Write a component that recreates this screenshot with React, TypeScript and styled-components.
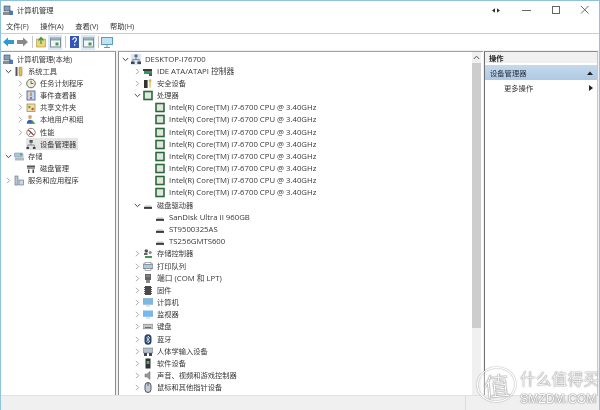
import React from "react";
import styled, { createGlobalStyle } from "styled-components";

const Global = createGlobalStyle`
  html, body { margin: 0; padding: 0; background: #fff; }
  body { width: 600px; height: 410px; overflow: hidden; font-family: "Open Sans", "Noto Sans CJK SC", sans-serif; }
`;

const Win = styled.div`
  position: relative; width: 600px; height: 410px; box-sizing: border-box;
  border: 1px solid #8fc3dc; border-bottom: 0; background: #fff;
  display: flex; flex-direction: column; overflow: hidden; color: #2a2a2a;
  font-size: 7.3px; filter: blur(0.3px);
`;
const TitleBar = styled.div`
  height: 18px; display: flex; align-items: center; padding-left: 2px; gap: 4px; flex: none; color: #333;
`;
const WinBtns = styled.div`
  margin-left: auto; display: flex; align-items: center; color: #555;
`;
const PinIcon = styled.span`
  display: flex; width: 30px; justify-content: center; margin-right: 1px;
`;
const WinBtn = styled.span`
  width: 29px; display: flex; justify-content: center;
`;
const MenuBar = styled.div`
  height: 14px; display: flex; align-items: center; gap: 11.5px; padding-left: 5px; flex: none;
  border-bottom: 1px solid #cdcdcd; color: #333;
`;
const ToolBar = styled.div`
  height: 16px; display: flex; align-items: center; flex: none;
`;
const ToolBtn = styled.span<{ $on?: boolean }>`
  width: 14px; height: 15px; display: flex; align-items: center; justify-content: center;
  background: ${p => (p.$on ? "#d8e9f6" : "transparent")};
`;
const ToolSep = styled.span`
  width: 1px; height: 12px; background: #c8c8c8; margin: 0 1px 0 3px;
`;
const Panes = styled.div`
  flex: 1; display: flex; background: #f0f0f0; padding-top: 1px; min-height: 0;
`;
const LeftPane = styled.div`
  width: 115px; flex: none; background: #fff; border-top: 1px solid #a0a0a0; border-right: 1px solid #8c8c8c;
  box-sizing: border-box; padding-top: 1px; margin-right: 1px;
`;
const CenterPane = styled.div`
  width: 365px; flex: none; background: #fff; border-left: 1.5px solid #909090; border-top: 1px solid #a0a0a0;
  box-sizing: border-box; display: flex; margin-left: 1px;
`;
const TreeCol = styled.div`
  flex: 1; padding-top: 1px; overflow: hidden;
`;
const Scrollbar = styled.div`
  width: 9px; background: #f0f0f0; margin-right: 2px; display: flex; flex-direction: column; align-items: center;
`;
const ScrollUp = styled.div`
  height: 11px; display: flex; align-items: center; justify-content: center; flex: none;
`;
const Thumb = styled.div`
  width: 9px; height: 265px; background: #cdcdcd; flex: none;
`;
const RightPane = styled.div`
  flex: 1; background: #fff; border-left: 1.5px solid #707070; border-top: 1px solid #8c8c8c; border-right: 1px solid #c8c8c8;
  box-sizing: border-box; margin-left: 1px; margin-right: 1px;
`;
const ActionHead = styled.div`
  height: 11px; background: #f0f0f0; font-weight: 700; display: flex; align-items: center; padding-left: 4px; color: #222;
  margin-bottom: 2px;
`;
const ActionSel = styled.div`
  height: 15px; background: linear-gradient(#c6d9ec, #aec9e3); display: flex; align-items: center; padding: 0 4px 0 5px;
  justify-content: space-between; color: #1f2b38;
`;
const ActionItem = styled.div`
  height: 15px; display: flex; align-items: center; justify-content: space-between; padding: 0 4px 0 19px; color: #333;
`;
const Row = styled.div<{ $indent: number }>`
  height: 12.18px; display: flex; align-items: center; padding-left: ${p => p.$indent}px; white-space: nowrap; color: #383838;
`;
const Arrow = styled.span`
  width: 11px; flex: none; display: flex; justify-content: center; align-items: center;
`;
const RowBody = styled.span<{ $sel?: boolean }>`
  display: flex; align-items: center; height: 12.18px; padding-right: ${p => (p.$sel ? 1 : 0)}px;
  background: ${p => (p.$sel ? "#e5e5e5" : "transparent")};
`;
const Ic = styled.span<{ $host?: boolean }>`
  width: 10px; height: 11px; display: flex; flex: none; align-items: center; justify-content: center; margin-right: 3px;
  background: ${p => (p.$host ? "#dbe8f4" : "transparent")};
`;
const Label = styled.span<{ $latin?: boolean }>`
  font-size: ${p => (p.$latin ? 7.75 : 7.25)}px; line-height: 11px; padding: 0 1px;
`;
const StatusBar = styled.div`
  height: 14px; flex: none; background: #f0f0f0; border-top: 1px solid #e2e2e2; display: flex;
`;
const StatusCell = styled.div`
  width: 106px; margin-left: auto; border-left: 1px solid #dcdcdc; margin-right: 27px;
`;
const Mark = styled.div`
  position: absolute; left: 476px; top: 366px; width: 124px; height: 40px; display: flex; align-items: flex-start;
  color: #fff; text-shadow: 0 0 1px #777, 0 0 1px #999, 0 0 2px #aaa;
`;
const MarkCircle = styled.div`
  width: 37px; height: 33px; border-radius: 50%; border: 1.2px solid #fff; box-shadow: 0 0 1.5px #777, inset 0 0 1.5px #777;
  display: flex; align-items: center; justify-content: center; font-size: 26px; flex: none; font-family: "Noto Sans CJK SC", sans-serif;
  font-weight: 300; transform: rotate(-6deg); background: rgba(255,255,255,.35); color: #fff;
`;
const MarkText = styled.div`
  display: flex; flex-direction: column; margin-left: 4px; margin-top: 4px; line-height: 1;
`;
const MarkCn = styled.div`
  font-size: 15.8px; font-family: "Noto Sans CJK SC", sans-serif; font-weight: 300; white-space: nowrap; height: 19px;
`;
const MarkEn = styled.div`
  font-size: 12.2px; font-family: "Liberation Sans", sans-serif; white-space: nowrap; margin-top: 3px;
`;

const Chev = ({ open }: { open?: boolean }) =>
  open ? (
    <svg width="7" height="7" viewBox="0 0 7 7"><path d="M.8 2l2.7 2.7L6.2 2" fill="none" stroke="#444" strokeWidth="1" /></svg>
  ) : (
    <svg width="7" height="7" viewBox="0 0 7 7"><path d="M2 .8l2.7 2.7L2 6.2" fill="none" stroke="#a6a6a6" strokeWidth="1" /></svg>
  );

type K = "mgmt"|"tools"|"clock"|"event"|"share"|"users"|"perf"|"dev"|"store"|"diskmg"|"svc"|"host"|"ide"|"sec"|"cpu"|"disk"|"ctrl"|"print"|"port"|"fw"|"pc"|"mon"|"kbd"|"bt"|"hid"|"soft"|"snd"|"mouse";

const Icon = ({ k }: { k: K }) => {
  const s = { width: 10, height: 11, viewBox: "0 0 10 11" };
  switch (k) {
    case "mgmt": return <svg {...s}><rect x="1" y="1" width="6" height="5" fill="#7f9fbf" stroke="#445" strokeWidth=".6"/><rect x="0" y="7" width="8" height="3" fill="#8c8c8c"/><path d="M6 5l4 1v4H6z" fill="#4a78b8"/></svg>;
    case "tools": return <svg {...s}><rect x="1.5" y="1" width="2" height="9" fill="#555"/><rect x="5" y="1" width="3" height="9" rx="1" fill="#e0c060" stroke="#8a7020" strokeWidth=".5"/></svg>;
    case "clock": return <svg {...s}><circle cx="5" cy="5.5" r="4.3" fill="#f1ecd6" stroke="#666" /><path d="M5 2.8v2.7h2.4" fill="none" stroke="#444" strokeWidth=".8"/></svg>;
    case "event": return <svg {...s}><rect x="1" y="1" width="8" height="9" fill="#c8d4ea" stroke="#3b5b93" strokeWidth=".8"/><path d="M5 2.5v3.5" stroke="#d08020" strokeWidth="1.4"/><circle cx="5" cy="8" r=".9" fill="#c03030"/></svg>;
    case "share": return <svg {...s}><rect x="1" y="2" width="8" height="7.5" fill="#efe0a0" stroke="#99823a" strokeWidth=".7"/><circle cx="3.4" cy="5" r="1.2" fill="#6a9a50"/><circle cx="6.6" cy="7" r="1.2" fill="#c05050"/></svg>;
    case "users": return <svg {...s}><circle cx="4" cy="3" r="1.9" fill="#d8a868"/><path d="M.8 9.8c0-3 1.5-4 3.2-4s3.2 1 3.2 4z" fill="#3662b0"/><path d="M6 6l3.5 3.8H5z" fill="#4a9848"/></svg>;
    case "perf": return <svg {...s}><circle cx="5" cy="5.5" r="4.2" fill="#fff" stroke="#777" strokeWidth=".9"/><path d="M2.3 3l5.4 5" stroke="#c83030" strokeWidth="1.3"/><path d="M3 8l2-3" stroke="#555" strokeWidth=".8"/></svg>;
    case "dev": return <svg {...s}><rect x="3.5" y="1" width="3.2" height="2.8" fill="#555"/><path d="M5 3.8V6M1.8 8V6h6.5v2" fill="none" stroke="#777" strokeWidth=".8"/><rect x=".5" y="8" width="2.6" height="2" fill="#444"/><rect x="6.9" y="8" width="2.6" height="2" fill="#444"/></svg>;
    case "store": return <svg {...s}><rect x="0" y="2" width="9" height="4" rx="1" fill="#a8c6e0" stroke="#6f8ea8" strokeWidth=".5"/><rect x="1" y="6.5" width="9" height="3" fill="#b8b8b8"/><circle cx="7" cy="3.5" r="1" fill="#40a050"/></svg>;
    case "diskmg": return <svg {...s}><path d="M1 3h8v3H1z" fill="#9a9a9a"/><rect x="1" y="2.5" width="8" height="1.5" fill="#555"/><path d="M2 6.5h1.4V10H2zM6.5 6.5H8V10H6.5z" fill="#444"/></svg>;
    case "svc": return <svg {...s}><rect x="1" y="1" width="3" height="9" fill="#b8c8d8" stroke="#667" strokeWidth=".6"/><rect x="5" y="5" width="4.5" height="5" fill="#c8d8ec" stroke="#667" strokeWidth=".6"/></svg>;
    case "host": return <svg {...s}><rect x="3.5" y=".5" width="3" height="2.8" fill="#5a6a80"/><path d="M5 3.4v2.2M1.8 7.6V5.6h6.4v2" fill="none" stroke="#5a6a80" strokeWidth=".8"/><rect x="0" y="7.5" width="3.6" height="2.5" fill="#445"/><rect x="6.4" y="7.5" width="3.6" height="2.5" fill="#445"/></svg>;
    case "ide": return <svg {...s}><rect x="0" y="3" width="9" height="2" fill="#3a3a3a"/><rect x="1" y="5" width="8" height="3" fill="#2f9a58"/><rect x="6" y="7.5" width="3" height="2.5" fill="#555"/></svg>;
    case "sec": return <svg {...s}><rect x="1" y="2" width="3.6" height="8" fill="#333"/><path d="M7 1.3a1.4 1.4 0 1 1 0 2.8 1.4 1.4 0 0 1 0-2.8zM6.4 4h1.2v5.5H6.4z" fill="#d9b040"/></svg>;
    case "cpu": return <svg {...s}><rect x="1" y="1.5" width="8" height="8" fill="#dfe7e0" stroke="#2c6a3a" strokeWidth="1.6"/></svg>;
    case "disk": return <svg {...s}><path d="M2 5.5h6l1 1.6H1z" fill="#c2c2c2"/><rect x="1" y="7" width="8" height="1.9" fill="#3c3c3c"/></svg>;
    case "ctrl": return <svg {...s}><circle cx="3.3" cy="3" r="1.8" fill="#555"/><rect x="1" y="5" width="3.5" height="2" fill="#666"/><rect x="2" y="8" width="7" height="2" fill="#3f9a50"/><circle cx="7.2" cy="4.6" r="1.5" fill="#888"/></svg>;
    case "print": return <svg {...s}><rect x="0" y="3" width="10" height="4.5" fill="#a8cce4" stroke="#555" strokeWidth=".6"/><rect x="2" y="1.5" width="6" height="1.8" fill="#fff" stroke="#666" strokeWidth=".5"/><rect x="2" y="7.5" width="6" height="2" fill="#fff" stroke="#666" strokeWidth=".5"/></svg>;
    case "port": return <svg {...s}><rect x="2" y="1" width="6" height="6" fill="#666"/><rect x="3" y="7" width="4" height="3" fill="#888"/><path d="M3 3h4" stroke="#bbb" strokeWidth=".7"/></svg>;
    case "fw": return <svg {...s}><rect x="2" y="1" width="6" height="9" fill="#4a4a4a"/><path d="M1 2.5h1M1 4.5h1M1 6.5h1M1 8.5h1M8 2.5h1M8 4.5h1M8 6.5h1M8 8.5h1" stroke="#333" strokeWidth=".8"/></svg>;
    case "pc": return <svg {...s}><rect x="0" y="1.2" width="10" height="6.3" fill="#7ab8e8" stroke="#9ab" strokeWidth=".5"/><path d="M3 8.5h4v1H3z" fill="#c0c8d0"/></svg>;
    case "mon": return <svg {...s}><rect x="0" y="1.5" width="10" height="6.3" fill="#78b8ea"/><path d="M3 8.5h4v1H3z" fill="#c0c8d0"/></svg>;
    case "kbd": return <svg {...s}><rect x="0" y="3.2" width="10" height="4.6" fill="#c6c6c6" stroke="#777" strokeWidth=".6"/><path d="M2 6.5h6" stroke="#555" strokeWidth=".8"/></svg>;
    case "bt": return <svg {...s}><rect x="1.5" y=".3" width="7" height="10.4" rx="3.5" fill="#26486e"/><path d="M3.2 3.6l3.6 3.6L5 9V2l1.8 1.8L3.2 7.4" fill="none" stroke="#fff" strokeWidth=".7"/></svg>;
    case "hid": return <svg {...s}><rect x="0" y="2" width="10" height="5" fill="#b4c0cc" stroke="#667" strokeWidth=".5"/><rect x="1" y="7" width="3" height="3" fill="#445"/><rect x="6" y="7" width="3" height="3" fill="#445"/></svg>;
    case "soft": return <svg {...s}><rect x="2.5" y=".5" width="5" height="10" fill="#333"/><rect x="3.7" y="3" width="2.6" height="3" fill="#50b070"/></svg>;
    case "snd": return <svg {...s}><path d="M2 4h2l3-2.5v8L4 7H2z" fill="#9a9a9a" stroke="#666" strokeWidth=".5"/></svg>;
    case "mouse": return <svg {...s}><rect x="2" y=".5" width="6" height="10" rx="3" fill="#c4ccd4" stroke="#445" strokeWidth=".9"/><path d="M5 1v3" stroke="#445" strokeWidth=".8"/></svg>;
  }
};

type Item = { t: string; k: K; lv: number; a?: "o" | "c"; sel?: boolean };
const left: Item[] = [
  { t: "系统工具", k: "tools", lv: 1, a: "o" },
  { t: "任务计划程序", k: "clock", lv: 2, a: "c" },
  { t: "事件查看器", k: "event", lv: 2, a: "c" },
  { t: "共享文件夹", k: "share", lv: 2, a: "c" },
  { t: "本地用户和组", k: "users", lv: 2, a: "c" },
  { t: "性能", k: "perf", lv: 2, a: "c" },
  { t: "设备管理器", k: "dev", lv: 2, sel: true },
  { t: "存储", k: "store", lv: 1, a: "o" },
  { t: "磁盘管理", k: "diskmg", lv: 2 },
  { t: "服务和应用程序", k: "svc", lv: 1, a: "c" },
];
const cpuRow: Item = { t: "Intel(R) Core(TM) i7-6700 CPU @ 3.40GHz", k: "cpu", lv: 2 };
const center: Item[] = [
  { t: "IDE ATA/ATAPI 控制器", k: "ide", lv: 1, a: "c" },
  { t: "安全设备", k: "sec", lv: 1, a: "c" },
  { t: "处理器", k: "cpu", lv: 1, a: "o" },
  ...Array(8).fill(cpuRow),
  { t: "磁盘驱动器", k: "disk", lv: 1, a: "o" },
  { t: "SanDisk Ultra II 960GB", k: "disk", lv: 2 },
  { t: "ST9500325AS", k: "disk", lv: 2 },
  { t: "TS256GMTS600", k: "disk", lv: 2 },
  { t: "存储控制器", k: "ctrl", lv: 1, a: "c" },
  { t: "打印队列", k: "print", lv: 1, a: "c" },
  { t: "端口 (COM 和 LPT)", k: "port", lv: 1, a: "c" },
  { t: "固件", k: "fw", lv: 1, a: "c" },
  { t: "计算机", k: "pc", lv: 1, a: "c" },
  { t: "监视器", k: "mon", lv: 1, a: "c" },
  { t: "键盘", k: "kbd", lv: 1, a: "c" },
  { t: "蓝牙", k: "bt", lv: 1, a: "c" },
  { t: "人体学输入设备", k: "hid", lv: 1, a: "c" },
  { t: "软件设备", k: "soft", lv: 1, a: "c" },
  { t: "声音、视频和游戏控制器", k: "snd", lv: 1, a: "c" },
  { t: "鼠标和其他指针设备", k: "mouse", lv: 1, a: "c" },
];

const TreeRow = ({ it, base }: { it: Item; base: number }) => (
  <Row $indent={base + it.lv * 12}>
    <Arrow>{it.a && <Chev open={it.a === "o"} />}</Arrow>
    <RowBody $sel={it.sel}>
      <Ic><Icon k={it.k} /></Ic>
      <Label $latin={/[A-Za-z]{2}/.test(it.t)}>{it.t}</Label>
    </RowBody>
  </Row>
);

const PaneIcon = () => (
  <svg width="11" height="11" viewBox="0 0 11 11"><rect x=".5" y="1" width="10" height="9" fill="#f4f4f4" stroke="#7b8a98"/><rect x="1" y="1.5" width="9" height="2" fill="#8ea3b8"/><rect x="5.5" y="5.5" width="3" height="3" fill="#3aa050"/></svg>
);

export default function App() {
  return (
    <>
      <Global />
      <Win>
        <TitleBar>
          <Icon k="mgmt" />
          <span>计算机管理</span>
          <WinBtns>
            <PinIcon><svg width="8" height="5" viewBox="0 0 8 5"><path d="M0 2.5L3 .3v4.4zM8 2.5L5 .3v4.4z" fill="#333"/></svg></PinIcon>
            <WinBtn><svg width="10" height="10" viewBox="0 0 10 10"><path d="M0 5.5h9" stroke="#666" /></svg></WinBtn>
            <WinBtn><svg width="10" height="10" viewBox="0 0 10 10"><rect x="1.5" y="1.5" width="7" height="7" fill="none" stroke="#666" /></svg></WinBtn>
            <WinBtn><svg width="10" height="10" viewBox="0 0 10 10"><path d="M1 1l7.5 7.5M8.5 1L1 8.5" stroke="#666" /></svg></WinBtn>
          </WinBtns>
        </TitleBar>
        <MenuBar>
          <span>文件(F)</span><span>操作(A)</span><span>查看(V)</span><span>帮助(H)</span>
        </MenuBar>
        <ToolBar>
          <ToolBtn><svg width="11" height="10" viewBox="0 0 11 10"><path d="M0 5l5-4.5V3h6v4H5v2.5z" fill="#2a9ad8"/></svg></ToolBtn>
          <ToolBtn><svg width="11" height="10" viewBox="0 0 11 10"><path d="M11 5L6 .5V3H0v4h6v2.5z" fill="#8a8a8a"/></svg></ToolBtn>
          <ToolSep />
          <ToolBtn><svg width="10" height="12" viewBox="0 0 10 12"><path d="M.5 3h9v8h-9z" fill="#ecd37c" stroke="#a99040" strokeWidth=".6"/><path d="M5 8V2.5M2.5 4.5L5 1.5l2.5 3" fill="none" stroke="#3a9a3a" strokeWidth="1.2"/></svg></ToolBtn>
          <ToolBtn $on><PaneIcon /></ToolBtn>
          <ToolSep />
          <ToolBtn><svg width="9" height="12" viewBox="0 0 9 12"><rect width="9" height="12" fill="#3356b8"/><path d="M2.8 4c0-3 3.6-3 3.6-.6 0 1.6-1.8 1.6-1.8 3.4" fill="none" stroke="#fff" strokeWidth="1.1"/><rect x="4" y="8.2" width="1.3" height="1.4" fill="#fff"/></svg></ToolBtn>
          <ToolBtn $on><PaneIcon /></ToolBtn>
          <ToolSep />
          <ToolBtn><svg width="12" height="11" viewBox="0 0 12 11"><rect x=".5" y=".5" width="11" height="7" fill="#bfe2f4" stroke="#5a9bc0"/><path d="M6 8v2M3 10.5h6" stroke="#5a9bc0"/></svg></ToolBtn>
        </ToolBar>
        <Panes>
          <LeftPane>
            <Row $indent={2}>
              <RowBody>
                <Ic><Icon k="mgmt" /></Ic>
                <Label>计算机管理(本地)</Label>
              </RowBody>
            </Row>
            {left.map((it, i) => <TreeRow key={i} it={it} base={-10} />)}
          </LeftPane>
          <CenterPane>
            <TreeCol>
              <Row $indent={1}>
                <Arrow><Chev open /></Arrow>
                <RowBody>
                  <Ic $host><Icon k="host" /></Ic>
                  <Label $latin>DESKTOP-I76700</Label>
                </RowBody>
              </Row>
              {center.map((it, i) => <TreeRow key={i} it={it} base={1} />)}
            </TreeCol>
            <Scrollbar>
              <ScrollUp><svg width="7" height="5" viewBox="0 0 7 5"><path d="M.8 4L3.5 1.2 6.2 4" fill="none" stroke="#555" strokeWidth="1"/></svg></ScrollUp>
              <Thumb />
            </Scrollbar>
          </CenterPane>
          <RightPane>
            <ActionHead>操作</ActionHead>
            <ActionSel>
              <span>设备管理器</span>
              <svg width="6" height="4" viewBox="0 0 6 4"><path d="M0 4l3-3.5L6 4z" fill="#222"/></svg>
            </ActionSel>
            <ActionItem>
              <span>更多操作</span>
              <svg width="4" height="6" viewBox="0 0 4 6"><path d="M0 0l4 3-4 3z" fill="#222"/></svg>
            </ActionItem>
          </RightPane>
        </Panes>
        <StatusBar><StatusCell /></StatusBar>
        <Mark>
          <MarkCircle>值</MarkCircle>
          <MarkText>
            <MarkCn>什么值得买</MarkCn>
            <MarkEn>SMZDM.COM</MarkEn>
          </MarkText>
        </Mark>
      </Win>
    </>
  );
}
